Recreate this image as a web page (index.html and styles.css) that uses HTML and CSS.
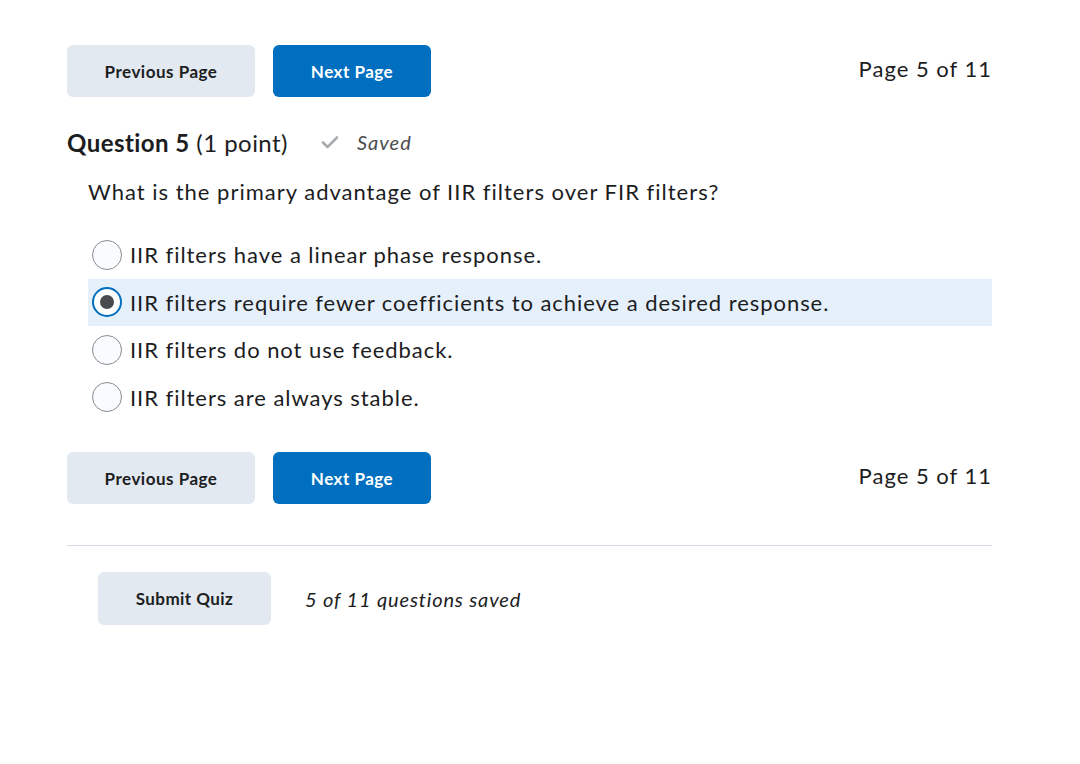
FILE: index.html
```html
<!DOCTYPE html>
<html>
<head>
<meta charset="utf-8">
<link rel="stylesheet" href="styles.css">
</head>
<body>
<div class="page">
  <div class="nav nav-top">
    <div class="nav-buttons">
      <button class="btn btn-secondary btn-prev">Previous Page</button>
      <button class="btn btn-primary btn-next">Next Page</button>
    </div>
    <div class="page-count">Page 5 of 11</div>
  </div>

  <div class="question-head">
    <span class="q-title"><strong>Question 5</strong> (1 point)</span>
    <span class="saved">
      <svg class="check" width="18" height="14" viewBox="0 0 18 14"><path d="M2 7.5 L6.5 12 L16 2.5" fill="none" stroke="#a8adb2" stroke-width="2.6" stroke-linecap="round" stroke-linejoin="round"/></svg>
      <em>Saved</em>
    </span>
  </div>

  <div class="question-body">
    <p class="q-text">What is the primary advantage of IIR filters over FIR filters?</p>
    <div class="options">
      <label class="option"><span class="radio"></span><span>IIR filters have a linear phase response.</span></label>
      <label class="option selected"><span class="radio checked"></span><span>IIR filters require fewer coefficients to achieve a desired response.</span></label>
      <label class="option"><span class="radio"></span><span>IIR filters do not use feedback.</span></label>
      <label class="option"><span class="radio"></span><span>IIR filters are always stable.</span></label>
    </div>
  </div>

  <div class="nav nav-bottom">
    <div class="nav-buttons">
      <button class="btn btn-secondary btn-prev">Previous Page</button>
      <button class="btn btn-primary btn-next">Next Page</button>
    </div>
    <div class="page-count">Page 5 of 11</div>
  </div>

  <hr class="divider">

  <div class="submit-row">
    <button class="btn btn-secondary btn-submit">Submit Quiz</button>
    <em class="saved-count">5 of 11 questions saved</em>
  </div>
</div>
</body>
</html>
```

FILE: styles.css
```css
* { box-sizing: border-box; }
html, body { margin: 0; padding: 0; background: #fff; }
body {
  font-family: Lato, "Open Sans", sans-serif;
  color: #1c1d1e;
  font-variant-ligatures: none;
}
.page {
  width: 925px;
  margin-left: 67px;
  padding-top: 45px;
}
.nav {
  display: flex;
  justify-content: space-between;
  align-items: center;
  height: 52px;
}
.nav-buttons {
  display: flex;
  gap: 18px;
}
.btn {
  font-family: Lato, sans-serif;
  font-variant-ligatures: none;
  font-weight: 700;
  font-size: 17px;
  letter-spacing: 0.5px;
  height: 52px;
  border: none;
  border-radius: 6px;
  padding: 0;
  color: #1c1d1e;
  cursor: pointer;
}
.btn-secondary { background: #e3e9f1; }
.btn-primary { background: #006fbf; color: #fff; }
.btn-prev { width: 188px; }
.btn-next { width: 158px; }
.page-count {
  font-size: 22px;
  letter-spacing: 1px;
  line-height: 1;
  margin-bottom: 4px;
}
.question-head {
  display: flex;
  align-items: center;
  height: 36px;
  margin-top: 27px;
}
.q-title { font-size: 24px; letter-spacing: 0.45px; }
.q-title strong { font-weight: 700; }
.saved {
  display: flex;
  align-items: center;
  margin-left: 33px;
  color: #494c4e;
  font-size: 20px;
  letter-spacing: 1px;
}
.saved .check { margin-right: 18px; }
.question-body {
  padding-left: 21px;
}
.q-text {
  margin: 0;
  font-size: 22px;
  letter-spacing: 1px;
  height: 30px;
  line-height: 30px;
  margin-top: 17px;
}
.options {
  margin-top: 24px;
  display: flex;
  flex-direction: column;
}
.option {
  display: flex;
  align-items: center;
  height: 47.5px;
  padding-left: 4px;
  font-size: 22px;
  letter-spacing: 0.95px;
  gap: 8px;
}
.option.selected { background: #e6f0fb; }
.radio {
  width: 30px;
  height: 30px;
  border-radius: 50%;
  border: 1px solid #868c8f;
  background: #f9fbff;
  flex: none;
  display: flex;
  align-items: center;
  justify-content: center;
}
.radio.checked {
  border: 2px solid #006fbf;
  background: #fff;
}
.radio.checked::after {
  content: "";
  width: 14px;
  height: 14px;
  border-radius: 50%;
  background: #494c4e;
}
.nav-bottom { margin-top: 31px; }
.divider {
  border: none;
  border-top: 1px solid #d3d9e3;
  margin: 41px 0 0 0;
}
.submit-row {
  display: flex;
  align-items: center;
  gap: 34px;
  padding-left: 31px;
  margin-top: 26px;
}
.btn-submit { width: 173px; height: 53px; letter-spacing: 0.45px; }
.saved-count {
  font-size: 20px;
  letter-spacing: 0.85px;
  color: #1c1d1e;
}
```
